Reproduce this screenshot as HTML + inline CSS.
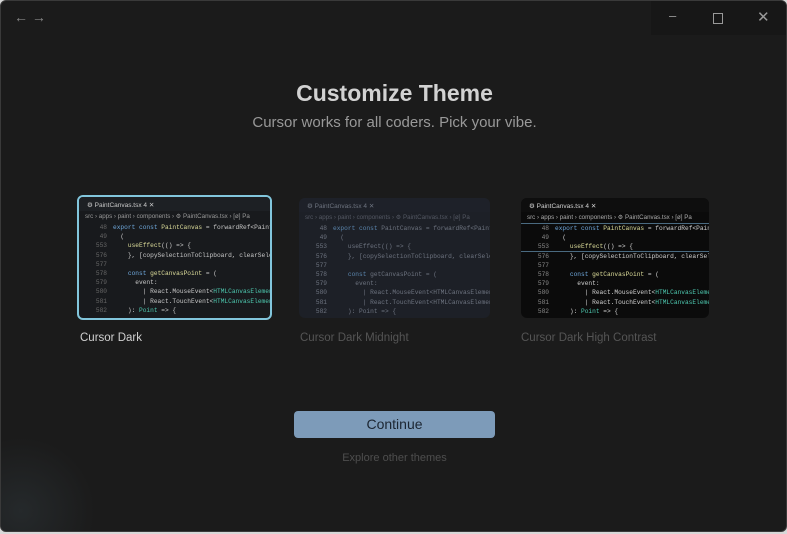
<!DOCTYPE html>
<html><head><style>
*{margin:0;padding:0;box-sizing:border-box}
html,body{width:787px;height:534px;overflow:hidden}
body{background:#d8d8d8;font-family:"Liberation Sans",sans-serif;position:relative}
.win{position:absolute;left:0;top:0;width:787px;height:532px;background:#1b1b1b;border:1px solid #3a3a3a;border-radius:6px;overflow:hidden}
.glow{position:absolute;left:-60px;bottom:-60px;width:160px;height:160px;background:radial-gradient(circle,#25292b 0%,transparent 65%)}
.ctl{position:absolute;right:0;top:0;width:135px;height:34px;background:#171717}
.t{position:absolute;color:#ccc;white-space:nowrap}
.card{position:absolute;border-radius:6px;overflow:hidden;font-family:"Liberation Mono",monospace;font-size:6.2px;line-height:9.2px}
.card .tab{height:14px;padding:4px 0 0 8px;font-family:"Liberation Sans",sans-serif;font-size:6.5px}
.card .bc{height:12px;padding:1px 0 0 6px;font-family:"Liberation Sans",sans-serif;font-size:6.2px;white-space:nowrap}
.ln{white-space:pre;height:9.2px}
.ln i{font-style:normal;display:inline-block;width:28px;text-align:right;margin-right:6px}
.k{color:#6fa8dc}.f{color:#dcdc9a}.c{color:#4ec9b0}
</style></head><body>
<div class="win">
<div class="glow"></div>
<div class="ctl"></div>
<div class="t" style="left:13px;top:8px;font-size:14px;color:#888">← →</div>
<div class="t" style="left:668px;top:7px;font-size:13px;color:#999">–</div>
<div style="position:absolute;left:712px;top:12px;width:10px;height:11px;border:1px solid #999"></div>
<div class="t" style="left:756px;top:7px;font-size:15px;color:#999">✕</div>
<div class="t" style="left:0;width:787px;text-align:center;top:79px;font-size:23px;font-weight:bold;color:#d2d2d2">Customize Theme</div>
<div class="t" style="left:0;width:787px;text-align:center;top:113px;font-size:15px;color:#999">Cursor works for all coders. Pick your vibe.</div>

<div class="card" style="left:76px;top:194px;width:195px;height:125px;background:#181a1d;border:2px solid #82c6dc;color:#c8c8c8">
<div class="tab" style="background:#1d2024">⚙ PaintCanvas.tsx 4 ✕</div>
<div class="bc" style="color:#999">src › apps › paint › components › ⚙ PaintCanvas.tsx › [ø] Pa</div>
<div class="ln"><i style="color:#666">48</i><span class="k">export const</span> <span class="f">PaintCanvas</span> = forwardRef&lt;PaintCa</div>
<div class="ln"><i style="color:#666">49</i>  (</div>
<div class="ln"><i style="color:#666">553</i>    <span class="f">useEffect</span>(() =&gt; {</div>
<div class="ln"><i style="color:#666">576</i>    }, [copySelectionToClipboard, clearSelect</div>
<div class="ln"><i style="color:#666">577</i></div>
<div class="ln"><i style="color:#666">578</i>    <span class="k">const</span> <span class="f">getCanvasPoint</span> = (</div>
<div class="ln"><i style="color:#666">579</i>      event:</div>
<div class="ln"><i style="color:#666">580</i>        | React.MouseEvent&lt;<span class="c">HTMLCanvasElement</span>&gt;</div>
<div class="ln"><i style="color:#666">581</i>        | React.TouchEvent&lt;<span class="c">HTMLCanvasElement</span>&gt;</div>
<div class="ln"><i style="color:#666">582</i>    ): <span class="c">Point</span> =&gt; {</div>
</div>

<div class="card" style="left:298px;top:197px;width:191px;height:120px;background:#1e222c;color:#8890a0;opacity:.75">
<div class="tab" style="background:#20242e">⚙ PaintCanvas.tsx 4 ✕</div>
<div class="bc" style="color:#666c7a">src › apps › paint › components › ⚙ PaintCanvas.tsx › [ø] Pa</div>
<div class="ln"><i>48</i><span class="k">export const</span> PaintCanvas = forwardRef&lt;PaintCa</div>
<div class="ln"><i>49</i>  (</div>
<div class="ln"><i>553</i>    useEffect(() =&gt; {</div>
<div class="ln"><i>576</i>    }, [copySelectionToClipboard, clearSelect</div>
<div class="ln"><i>577</i></div>
<div class="ln"><i>578</i>    <span class="k">const</span> getCanvasPoint = (</div>
<div class="ln"><i>579</i>      event:</div>
<div class="ln"><i>580</i>        | React.MouseEvent&lt;HTMLCanvasElement&gt;</div>
<div class="ln"><i>581</i>        | React.TouchEvent&lt;HTMLCanvasElement&gt;</div>
<div class="ln"><i>582</i>    ): Point =&gt; {</div>
</div>

<div class="card" style="left:520px;top:197px;width:188px;height:120px;background:#0b0b0b;color:#d0d0d0">
<div class="tab" style="background:#0e0e0e">⚙ PaintCanvas.tsx 4 ✕</div>
<div class="bc" style="color:#aaa;border-bottom:1px solid #4a6a80">src › apps › paint › components › ⚙ PaintCanvas.tsx › [ø] Pa</div>
<div class="ln"><i style="color:#888">48</i><span class="k">export const</span> <span class="f">PaintCanvas</span> = forwardRef&lt;PaintCa</div>
<div class="ln"><i style="color:#888">49</i>  (</div>
<div class="ln" style="border-bottom:1px solid #4a6a80"><i style="color:#888">553</i>    <span class="f">useEffect</span>(() =&gt; {</div>
<div class="ln"><i style="color:#888">576</i>    }, [copySelectionToClipboard, clearSelect</div>
<div class="ln"><i style="color:#888">577</i></div>
<div class="ln"><i style="color:#888">578</i>    <span class="k">const</span> <span class="f">getCanvasPoint</span> = (</div>
<div class="ln"><i style="color:#888">579</i>      event:</div>
<div class="ln"><i style="color:#888">580</i>        | React.MouseEvent&lt;<span class="c">HTMLCanvasElement</span>&gt;</div>
<div class="ln"><i style="color:#888">581</i>        | React.TouchEvent&lt;<span class="c">HTMLCanvasElement</span>&gt;</div>
<div class="ln"><i style="color:#888">582</i>    ): <span class="c">Point</span> =&gt; {</div>
</div>

<div class="t" style="left:79px;top:331px;font-size:11.5px;color:#d0d0d0">Cursor Dark</div>
<div class="t" style="left:299px;top:331px;font-size:11.5px;color:#555">Cursor Dark Midnight</div>
<div class="t" style="left:520px;top:331px;font-size:11.5px;color:#555">Cursor Dark High Contrast</div>

<div style="position:absolute;left:293px;top:410px;width:201px;height:27px;background:#7d9bb9;border-radius:4px;color:#1c2632;font-size:14px;text-align:center;line-height:27px">Continue</div>
<div class="t" style="left:0;width:787px;text-align:center;top:451px;font-size:11px;color:#4e4e4e">Explore other themes</div>
</div>
</body></html>
